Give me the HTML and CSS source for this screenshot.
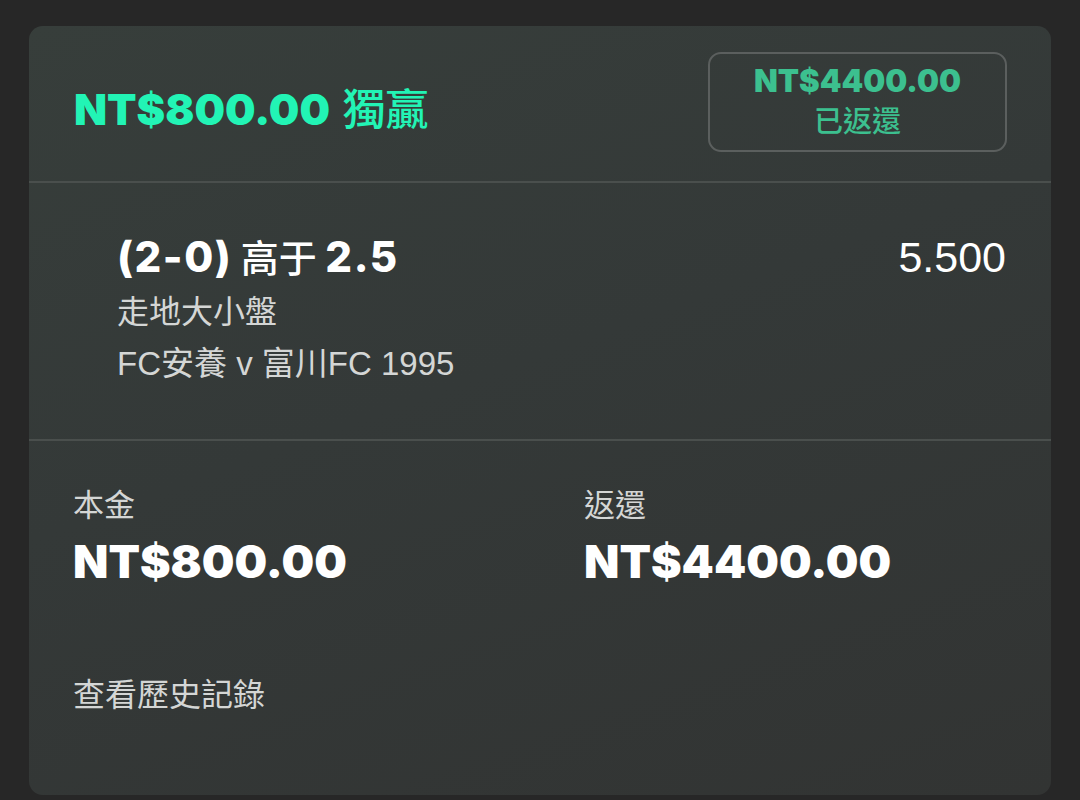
FILE: index.html
```html
<!DOCTYPE html>
<html lang="zh-Hant">
<head>
<meta charset="utf-8">
<title>Bet receipt</title>
<link rel="stylesheet" href="styles.css">
</head>
<body>
<div class="card">
  <header class="head">
    <h1 class="win"><span class="amt">NT$800.00</span> <span class="kind">獨贏</span></h1>
    <div class="badge">
      <div class="badge-amt">NT$4400.00</div>
      <div class="badge-lbl">已返還</div>
    </div>
  </header>
  <section class="sel">
    <div class="sel-row">
      <div class="sel-title"><b>(2-0)</b> 高于 <b>2.5</b></div>
      <div class="odds">5.500</div>
    </div>
    <div class="sel-market">走地大小盤</div>
    <div class="sel-event">FC安養 v 富川FC 1995</div>
  </section>
  <section class="totals">
    <div class="cols">
      <div class="col">
        <div class="lbl">本金</div>
        <div class="val">NT$800.00</div>
      </div>
      <div class="col">
        <div class="lbl">返還</div>
        <div class="val">NT$4400.00</div>
      </div>
    </div>
    <div class="history">查看歷史記錄</div>
  </section>
</div>
</body>
</html>
```

FILE: styles.css
```css
* { box-sizing: border-box; margin: 0; padding: 0; }
html, body { height: 100%; }
body {
  background: #272727;
  padding: 26px 29px 5px 29px;
  font-family: "Liberation Sans", "Noto Sans CJK TC", sans-serif;
  color: #fff;
}
.card {
  height: 769px;
  border-radius: 14px;
  background: linear-gradient(160deg, #373e3b 0%, #343938 45%, #323433 100%);
  overflow: hidden;
}
.head {
  height: 157px;
  display: flex;
  align-items: center;
  justify-content: space-between;
  padding: 0 44px 0 45px;
  border-bottom: 2px solid #4a4f4d;
}
.win {
  font-family: "Noto Sans CJK TC", sans-serif;
  font-size: 42px;
  font-weight: 500;
  color: #22f4b5;
  margin-top: 4px;
}
.amt {
  font-family: Inter, "Noto Sans CJK TC", sans-serif;
  font-weight: 900;
  font-size: 43px;
}
.kind {
  font-size: 43px;
  margin-left: 3px;
}
.badge {
  width: 299px;
  height: 100px;
  border: 2px solid #5b5f5e;
  border-radius: 13px;
  display: flex;
  flex-direction: column;
  align-items: center;
  justify-content: center;
  color: #3cc08f;
  margin-top: -4px;
}
.badge-amt {
  font-family: Inter, sans-serif;
  font-weight: 900;
  font-size: 31px;
  line-height: 36px;
  margin-top: -2px;
}
.badge-lbl {
  font-family: "Noto Sans CJK TC", sans-serif;
  font-size: 29px;
  line-height: 40px;
  font-weight: 500;
}
.sel {
  height: 258px;
  padding: 48px 45px 0 88px;
  border-bottom: 2px solid #4a4f4d;
}
.sel-row {
  display: flex;
  justify-content: space-between;
  align-items: baseline;
}
.sel-title {
  font-family: "Noto Sans CJK TC", sans-serif;
  font-size: 38px;
  line-height: 50px;
  font-weight: 500;
}
.sel-title b {
  font-family: Inter, sans-serif;
  font-weight: 800;
  font-size: 42px;
  letter-spacing: 1.5px;
}
.odds {
  font-family: "Liberation Sans", sans-serif;
  font-size: 43px;
  line-height: 50px;
}
.sel-market, .sel-event {
  font-family: "Liberation Sans", "Noto Sans CJK TC", sans-serif;
  font-size: 32px;
  line-height: 52px;
  color: #d4d6d5;
}
.sel-market { margin-top: 4px; }
.sel-event { font-size: 33px; }
.totals {
  padding: 40px 45px 0 44px;
}
.cols {
  display: grid;
  grid-template-columns: 511px 1fr;
}
.lbl {
  font-family: "Noto Sans CJK TC", sans-serif;
  font-size: 31px;
  line-height: 44px;
  color: #d4d6d5;
}
.val {
  font-family: Inter, sans-serif;
  font-weight: 900;
  font-size: 46px;
  line-height: 60px;
  margin-top: 6px;
}
.history {
  margin-top: 79px;
  font-family: "Noto Sans CJK TC", sans-serif;
  font-size: 32px;
  line-height: 44px;
  color: #d4d6d5;
}
```
